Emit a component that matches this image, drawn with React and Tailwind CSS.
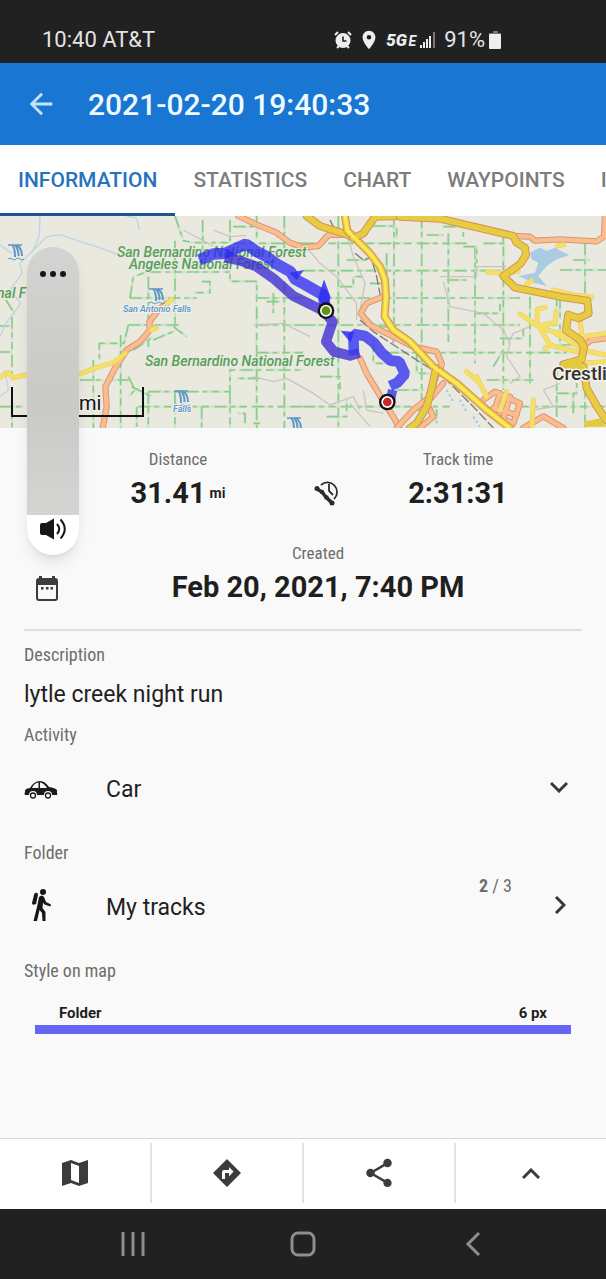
import React, { useState } from 'react';
import { MdArrowBack, MdLocationOn, MdShare } from 'react-icons/md';

const TABS = ['Information', 'Statistics', 'Chart', 'Waypoints', 'Images'];

// minor boundaries, drawn as dashed green strokes
const BOUNDARIES = [
    'M0 348H28 M36 320V510 M0 590H76 M36 590V654 M18 270l26 42 M0 426H30',
    'M525 18L550 92L580 98H690 M690 30V214H770V500 M525 92V350 M445 200V410 M390 264H590 M385 345H540 M390 264L400 200L440 186H690 M605 215H630V248H580',
    'M385 345L372 400H298V450 M362 375V654 M240 510H395 M415 590H909 M445 545H690V480H909 M445 545V654 M525 545V654 M605 590V654 M690 545V654 M770 480V654 M853 215V654 M280 450V654',
    'M770 345H909 M770 264H909 M770 428H909 M700 100H909 M853 18V130 M770 18V90 M700 50h60 M608 30V150 M800 275h40M820 250v60',
    'M385 500l20 40l-20 20M395 530l60 30 M520 350l40 30 M460 390l70 -30 M400 420l60 -40 M410 590v60 M735 640v-30h-20 M760 640h20 M780 505h-70',
    'M909 100H1400 M1015 18V654 M1182 18V380 M1265 18V654 M1345 70V400 M1425 110V460 M1510 80V540 M1590 260V520 M1680 260V330 M1755 100V260',
    'M909 182H1500 M960 264H1560 M909 345H1560 M1160 428H1700 M1460 510H1600 M909 590H1350 M1550 590H1818 M1755 500V654 M1670 480V620 M1680 180H1818',
    'M1120 48h70v40 M1280 75h50M1330 50h60v30 M1390 110h40v50 M1450 100h60v80 M1020 230h40v-30h30 M1110 220h50v-80 M1040 150h60 M1340 210h60 M1610 250h60v60 M1430 310h70v-30 M1500 385h70v-30 M1480 470l30 -50 M960 500h60v40 M980 620h60v-50 M1230 600h80v40 M1250 420v70h50 M1700 90h60 M1720 150h50',
    'M1630 345h50v60h40 M1670 550h60v-30 M1720 610v-60 M1190 540h80 M1160 130v60 M1140 350h40v50 M1120 390v70h50',
];

const TRAILS = [
    'M120 18L118 75L100 120L60 160L66 190L30 240L62 280L18 340L0 380 M100 120L140 80L180 74L250 98L290 110L350 132 M380 18L410 24L418 60 M0 105L35 130 M15 480L25 540L0 560',
];

const PATHS = [
    'M640 60L690 80L740 76 M550 60L640 108 M760 345L850 340L930 380 M760 500L820 515L860 505L940 550L990 585L1060 560L1080 600 M909 100L960 160L1010 200L1070 280L1070 330 M1040 70L1060 140L1095 220L1080 300L1130 350',
    'M1320 200h110v-30h90 M1330 215L1350 290L1450 310L1510 360L1530 400L1520 440L1560 500L1530 520 M1590 350L1540 370L1525 400 M1680 520L1630 540L1660 590L1600 600 M1090 540L1100 600L1150 610 M1110 650l-60 -70',
];

const ROADS_ORANGE = [
    'M715 18L770 44L830 68L870 98L909 112L955 108L985 75L1030 74',
    'M500 280L475 300L448 336L450 360L420 395L380 420L345 475L316 530L320 590L308 654',
    'M1144 262L1100 280L1082 310L1110 345L1240 410L1310 425L1325 460L1320 490',
    'M1080 445L1100 490L1130 540L1160 590L1180 620L1198 654',
    'M1310 490L1290 560L1240 600L1190 654 M1330 520L1280 580L1300 620L1260 654',
    'M1540 78L1590 80L1605 92L1680 88L1790 94L1812 80L1815 18',
    'M1450 570L1485 545L1560 580L1540 640L1490 620L1440 580 M1480 595l70 20M1500 550l-20 60M1530 560l-20 65 M1570 654l60 -35l60 35 M1818 385L1775 390L1745 410',
];

const ROADS_YELLOW = [
    'M920 18L960 48L1030 70L1060 82',
    'M1035 18L1042 62L1068 88L1108 128L1140 170L1155 210L1158 260L1154 320L1180 360L1230 395L1300 470L1370 520L1460 600L1530 654',
    'M1200 18L1125 20L1090 70L1060 85',
    'M1200 20L1320 26L1540 78L1550 98L1575 113L1578 135L1560 163L1510 198L1545 233L1620 248L1690 262L1762 272L1766 310L1735 325L1705 314L1698 360L1740 390L1752 410L1745 448L1690 463L1750 470L1760 535L1790 588L1818 630',
    'M1308 475L1296 530L1280 590L1250 640L1230 654',
];

const STREETS = [
    'M0 502L25 488L40 504L80 494 M240 492L280 476L340 458L375 430 M500 282L515 268 M455 360L468 354',
    'M1560 312L1610 346L1660 366L1740 378 M1610 346L1612 298L1635 292 M1668 305L1665 338L1612 348 M1620 353L1650 405L1740 428 M1650 405L1635 415 M1660 366L1750 418 M1462 186L1510 190L1555 184 M1580 222L1595 212 M1660 240L1720 255L1775 262',
    'M1400 485L1440 520L1460 560 M1440 520L1430 500 M1600 570L1596 654 M1520 545L1500 600 M1745 420L1818 435 M1750 380L1818 370 M1690 104L1672 108 M1740 330L1748 400 M1745 460L1818 455 M1760 640h58',
];

const Waterfall = ({ x, y }) => (
    <g transform={`translate(${x} ${y})`} stroke="#5e97c6" fill="none">
        <path d="M0 1H14" strokeWidth="1.5" />
        <path d="M4 1C7 3 7 8 7 13 M7 1C10 4 10.500 8 10.500 12 M9 1C13 4 14 8 14 12" strokeWidth="2" />
        <path d="M0 15q2 -2 4 0t4 0t4 0t4 0" strokeWidth="1" />
    </g>
);

const TrackMap = () => (
    <svg
        className="block h-53 w-full bg-[#eae9df] font-[Roboto,sans-serif]"
        viewBox="0 0 606 212"
        preserveAspectRatio="xMidYMid slice"
        role="img"
        aria-label="Track map"
    >
        <g transform="translate(0 -6) scale(0.33333)" fill="none" strokeLinejoin="round">
            <path d="M1590 128L1620 113L1640 123L1665 113L1708 136L1670 148L1640 168L1615 198L1640 228L1600 218L1555 198L1605 188L1615 158L1595 148Z" fill="#a9cbe4" />
            {BOUNDARIES.map((d) => (
                <g key={d}>
                    <path d={d} stroke="#cfe3c8" strokeWidth="7" strokeDasharray="70 14" />
                    <path d={d} stroke="#8bce8c" strokeWidth="5" strokeDasharray="36 12 14 14 22 16" />
                </g>
            ))}
            {TRAILS.map((d) => <path key={d} d={d} stroke="#bcd5e6" strokeWidth="4" />)}
            {PATHS.map((d) => <path key={d} d={d} stroke="#c9c5bf" strokeWidth="4" />)}
            <path d="M990 30L1005 60L1060 90L1110 130L1130 200L1142 262 M1065 130L1090 150L1120 140 M1080 330L1120 365L1250 450L1330 500L1420 590L1480 654" stroke="#7d7a78" strokeWidth="4" strokeDasharray="30 8" />
            <path d="M1340 540l20 35M1380 570l20 35M1420 620l20 30" stroke="#9cc9ec" strokeWidth="6" strokeDasharray="7 8" />
            {ROADS_ORANGE.map((d) => (
                <g key={d} strokeLinecap="round">
                    <path d={d} stroke="#dc9477" strokeWidth="19" />
                    <path d={d} stroke="#f9bd8e" strokeWidth="13" />
                </g>
            ))}
            {STREETS.map((d) => (
                <g key={d} strokeLinecap="round">
                    <path d={d} stroke="#e6cd68" strokeWidth="15" />
                    <path d={d} stroke="#f5df66" strokeWidth="12" />
                </g>
            ))}
            {ROADS_YELLOW.map((d) => (
                <g key={d} strokeLinecap="round">
                    <path d={d} stroke="#d6925a" strokeWidth="24" />
                    <path d={d} stroke="#e6cc3e" strokeWidth="18" />
                </g>
            ))}
            <path d="M1035 18L1042 62L1068 88L1108 128L1140 170L1155 210L1158 260L1154 320L1180 360L1230 395L1300 470L1370 520L1460 600L1530 654" stroke="#fbea56" strokeWidth="10" />
            <path d="M1680 475L1710 445L1740 450L1750 480Z M1755 635L1800 625L1818 650H1755Z" fill="#e3c93f" />
        </g>

        <g fill="#559f5c" fontSize="14" fontStyle="italic" fontWeight="500" stroke="#eae9df" strokeWidth="2" paintOrder="stroke">
            <text x="117" y="41">San Bernardino National Forest</text>
            <text x="129" y="53">Angeles National Forest</text>
            <text x="145" y="150">San Bernardino National Forest</text>
            <text x="-3" y="82">nal F</text>
        </g>
        <Waterfall x={8} y={28} />
        <Waterfall x={149} y={72} />
        <Waterfall x={174} y={174} />
        <Waterfall x={287} y={201} />
        <g fill="#5b93c3" fontSize="9" fontWeight="500" fontStyle="italic" stroke="#eef1ef" strokeWidth="2" paintOrder="stroke">
            <text x="123" y="96">San Antonio Falls</text>
            <text x="173" y="196">Falls</text>
        </g>

        <g transform="translate(0 -6) scale(0.33333)" fill="none" strokeLinejoin="bevel">
            <path
                d="M675 142L720 152L770 170L820 205L880 258L970 302L998 335L978 395L1002 425L1050 437L1078 428"
                stroke="#3a2ad2"
                strokeOpacity="0.78"
                strokeWidth="30"
                strokeLinejoin="round"
            />
            <path
                d="M598 150L640 132L675 130L738 102L770 125L800 140L835 165L872 185L885 208L912 222L970 255L975 290"
                stroke="#2b29f5"
                strokeOpacity="0.76"
                strokeWidth="34"
            />
            <path
                d="M1062 435L1060 372L1095 378L1122 398L1145 428L1172 452L1198 455L1215 492L1192 518L1170 528"
                stroke="#3a39f2"
                strokeOpacity="0.82"
                strokeWidth="32"
            />
            <path d="M1178 540L1170 575" stroke="#3a39f2" strokeOpacity="0.82" strokeWidth="28" />
            <path d="M972 208L992 262L985 280H962L955 262Z M675 115L705 130L685 145Z M868 188L912 180L890 210Z M1022 362L1062 366L1052 398Z" fill="#302ef2" fillOpacity="0.85" />
            <circle cx="978" cy="302" r="25" fill="#111" />
            <circle cx="978" cy="302" r="18" fill="#fff" />
            <circle cx="978" cy="302" r="13" fill="#5f9410" />
            <circle cx="1162" cy="576" r="25" fill="#111" />
            <circle cx="1162" cy="576" r="18" fill="#fff" />
            <circle cx="1162" cy="576" r="13" fill="#c9252b" />
        </g>
        <text x="552" y="164" fontSize="19" fontWeight="500" fill="#333" stroke="#f4f2ea" strokeWidth="3" paintOrder="stroke">Crestli</text>
        <path d="M12 171V200H143V171" fill="none" stroke="#111" strokeWidth="2" />
        <text x="79" y="194" fontSize="20" fill="#111" stroke="#f4f2ea" strokeWidth="2" paintOrder="stroke">mi</text>
    </svg>
);

const StatusBar = () => (
    <div className="flex h-[63px] items-center bg-[#212121] pt-4 pr-[105px] pl-[42px] text-[22px] leading-7 text-[#e4e4e4]">
        <span className="flex-1">10:40 AT&amp;T</span>
        <svg className="mr-1.5 h-[18px] w-[18px]" viewBox="0 0 18 18" fill="none" stroke="#eee" strokeWidth="2">
            <circle cx="9" cy="9.500" r="6.500" fill="#eee" />
            <path d="M1 4L4 1M17 4L14 1M3 17L5 15M15 17L13 15" />
            <path d="M9 5.500V10H12.500" stroke="#212121" strokeWidth="1.600" />
        </svg>
        <MdLocationOn className="mr-1.5 size-[22px] text-[#eee]" />
        <span className="mr-1 font-bold text-[#eee] italic">
            <span className="text-[17px] font-black">5G</span> <span className="-ml-1 text-sm">E</span>
        </span>
        <svg className="mr-2 h-[17px] w-4" viewBox="0 0 16 17" fill="#eee">
            <path d="M0 14h2v3H0zM3 11h2v6H3zM6 8h2v9H6zM9 5h2v12H9z" />
            <path d="M13 1h2v16h-2z" fill="#777" />
        </svg>
        <span>91%</span>
        <svg className="ml-1 h-[18px] w-3" viewBox="0 0 12 18" fill="#eee">
            <path d="M4 0h5v2h3v3H0V2h4z" fill="#777" />
            <rect y="3" width="12" height="15" rx="1" />
        </svg>
    </div>
);

const VolumePanel = () => {
    const [volume, setVolume] = useState(13);

    return (
        <div className="absolute top-[247px] left-[27px] flex h-77 w-13 flex-col items-center justify-between overflow-hidden rounded-full bg-linear-to-b from-[#d3d3d1] via-[#c9cac6] to-[#d8d8d8] shadow-lg">
            <input
                type="range"
                min="0"
                max="100"
                value={volume}
                onChange={(e) => setVolume(Number(e.target.value))}
                aria-label="Volume"
                className="absolute inset-0 h-full w-full opacity-0 [writing-mode:vertical-lr]"
            />
            <button type="button" aria-label="More" className="relative flex h-[54px] w-full items-center justify-center gap-1">
                <span className="size-[6px] rounded-full bg-[#161616]" />
                <span className="size-[6px] rounded-full bg-[#161616]" />
                <span className="size-[6px] rounded-full bg-[#161616]" />
            </button>
            <button type="button" aria-label="Mute" className="relative flex h-10 w-full justify-center bg-white pt-[3px]">
                <svg className="h-[22px] w-7" viewBox="0 0 28 22" fill="none" stroke="#161616" strokeWidth="2">
                    <path d="M1 7Q1 5 3 5H7L15 0.500V21.500L7 17H3Q1 17 1 15Z" fill="#161616" stroke="none" />
                    <path d="M18 6Q22.500 11 18 16M21.500 1.500Q30 11 21.500 20.500" />
                </svg>
            </button>
        </div>
    );
};

const CalendarIcon = () => (
    <svg className="h-[25px] w-[22px]" viewBox="0 0 22 25" fill="#3c3c3c">
        <path d="M3 0h3v2h10V0h3v2Q22 2 22 5V22Q22 25 19 25H3Q0 25 0 22V5Q0 2 3 2ZM2 9V22Q2 23 3 23H19Q20 23 20 22V9Z" />
        <path d="M5 11h2.500v2.500H5zM10 11h2.500v2.500H10zM14.500 11H17v2.500h-2.500z" />
    </svg>
);

const TrackTimeIcon = () => (
    <svg className="size-7" viewBox="0 0 28 28" fill="none" stroke="#2b2b2b">
        <path d="M7 6A9.500 9.500 0 1 1 20 20" strokeWidth="1.800" />
        <path d="M15 5V12L19 16" strokeWidth="1.800" />
        <path d="M3 10L8 13L12 18L18 24" strokeWidth="3.500" />
        <g fill="#2b2b2b" stroke="none">
            <circle cx="3" cy="9.500" r="2.500" />
            <circle cx="8" cy="13" r="2.300" />
            <circle cx="12.500" cy="18.500" r="2.300" />
            <circle cx="18" cy="24" r="2.500" />
        </g>
    </svg>
);

const CarIcon = () => (
    <svg className="h-[18px] w-[34px]" viewBox="0 0 34 18" fill="#1b1b1b">
        <path d="M1 9Q3 7 6 7Q10 0 16 0Q21 0 25 6Q31 7 33 9V12Q34 14 32 14H28A4 4 0 0 0 20 14H13A4 4 0 0 0 5 14H1Q0 13 1 11ZM8 7H14.500V1.500Q10 2 8 7ZM16 7H23Q20 2 16 1.500Z" fillRule="evenodd" />
        <circle cx="9" cy="14.500" r="2.500" fill="none" stroke="#1b1b1b" strokeWidth="1.300" />
        <circle cx="24" cy="14.500" r="2.500" fill="none" stroke="#1b1b1b" strokeWidth="1.300" />
    </svg>
);

const HikerIcon = () => (
    <svg className="h-8 w-5" viewBox="0 0 20 32" fill="#161616">
        <circle cx="11" cy="3" r="3" />
        <path d="M3 4Q6 3 6 6L4 15Q0 17 0 14L2 6Q2 5 3 4Z" />
        <path d="M7 8Q10 5 12 8L14 13L19 15.500L18.500 17.500L12.500 15.500L11 13.500L10.500 19L13.500 23L13.500 32H10.500L10 24L7.500 21L5 32H1.500L5 18Z" />
    </svg>
);

const FieldLabel = ({ children, htmlFor }) => (
    <label htmlFor={htmlFor} className="block text-[18px] leading-6 text-[#6d6d6d] font-['Roboto_Condensed',Roboto,sans-serif]">
        {children}
    </label>
);

const Stat = ({ label, value, unit }) => (
    <div className="flex-1 text-center">
        <p className="text-[17px] leading-6 text-[#6d6d6d] font-['Roboto_Condensed',Roboto,sans-serif]">{label}</p>
        <p className="mt-1 flex items-center justify-center text-[29px] leading-9 font-bold">
            {value}
            {unit && <span className="ml-1 text-sm">{unit}</span>}
        </p>
    </div>
);

const App = () => {
    const [activeTab, setActiveTab] = useState('Information');

    return (
        <div className="relative flex min-h-screen flex-col overflow-x-hidden bg-[#f9f9f9] text-[#1f1f1f] font-[Roboto,sans-serif]">
            <StatusBar />

            <header className="flex h-[82px] items-center bg-[#1976d2] px-6 text-[#eefaff]">
                <button type="button" aria-label="Back" className="mr-[30px]">
                    <MdArrowBack className="size-[34px] text-[#c3e4fb]" />
                </button>
                <h1 className="pt-0.5 text-[30px] leading-9 font-medium">2021-02-20 19:40:33</h1>
            </header>

            <nav className="flex h-[71px] shrink-0 overflow-hidden bg-white">
                {TABS.map((tab) => (
                    <button
                        key={tab}
                        type="button"
                        onClick={() => setActiveTab(tab)}
                        className={`border-b-3 px-[18px] pt-1 text-[21px] font-medium uppercase ${activeTab === tab ? 'border-[#1b5592] text-[#2673bd]' : 'border-transparent text-[#7c7c7c]'}`}
                    >
                        {tab}
                    </button>
                ))}
            </nav>

            <TrackMap />
            <VolumePanel />

            <main className="flex-1 px-6 pt-[19px]">
                <div className="flex items-end pr-4 pl-[46px]">
                    <Stat label="Distance" value="31.41" unit="mi" />
                    <div className="flex w-16 justify-end pr-2 pb-1">
                        <TrackTimeIcon />
                    </div>
                    <Stat label="Track time" value="2:31:31" />
                </div>
                <div className="mt-[30px] flex items-end pr-4">
                    <div className="flex w-[46px] justify-center pb-1">
                        <CalendarIcon />
                    </div>
                    <Stat label="Created" value="Feb 20, 2021, 7:40 PM" />
                </div>

                <hr className="mt-6 border-t-2 border-[#dedede]" />

                <section className="mt-3">
                    <FieldLabel>Description</FieldLabel>
                    <p className="my-3 text-[23px] leading-8">lytle creek night run</p>
                </section>

                <FieldLabel htmlFor="activity">Activity</FieldLabel>
                <div className="relative mb-2 flex h-[86px] items-center">
                    <span className="w-[82px]"><CarIcon /></span>
                    <select id="activity" className="h-full flex-1 appearance-none bg-transparent text-[23px] leading-8">
                        <option>Car</option>
                    </select>
                    <svg className="pointer-events-none absolute right-3.5 mb-1.5 h-3 w-[18px]" viewBox="0 0 18 12" fill="none" stroke="#383838" strokeWidth="3">
                        <path d="M1 2L9 10L17 2" />
                    </svg>
                </div>

                <FieldLabel htmlFor="folder">Folder</FieldLabel>
                <button id="folder" type="button" className="mb-2 flex h-[86px] w-full items-center text-left">
                    <span className="flex w-[82px] pb-1.5 pl-2"><HikerIcon /></span>
                    <span className="flex-1 text-[23px] leading-8">My tracks</span>
                    <span className="mr-[42px] pb-11 text-[18px] leading-6 text-[#6d6d6d] font-['Roboto_Condensed',Roboto,sans-serif]">
                        <b>2</b> / 3
                    </span>
                    <svg className="mr-4 mb-1.5 h-[18px] w-3" viewBox="0 0 12 18" fill="none" stroke="#383838" strokeWidth="3">
                        <path d="M2 1L10 9L2 17" />
                    </svg>
                </button>

                <FieldLabel>Style on map</FieldLabel>
                <div className="mx-[11px] mt-5">
                    <div className="flex justify-between px-6 text-[15px] leading-5 font-bold">
                        <span>Folder</span>
                        <span>6 px</span>
                    </div>
                    <div className="mt-0.5 h-[9px] bg-[#6666f5]" />
                </div>
            </main>

            <footer className="mt-6">
                <div className="flex h-[71px] items-center border-t border-[#d6d6d6] bg-white pb-0.5 text-[#3c3c3c]">
                    <button type="button" aria-label="Show on map" className="flex h-[60px] flex-1 items-center justify-center border-r-2 border-[#e4e4e4]">
                        <svg className="size-[26px]" viewBox="0 0 26 26" fill="currentColor" fillRule="evenodd">
                            <path d="M0 3L9 0L17 3L26 0V23L17 26L9 23L0 26ZM9 3V20L17 23V6Z" />
                        </svg>
                    </button>
                    <button type="button" aria-label="Navigate" className="flex h-[60px] flex-1 items-center justify-center border-r-2 border-[#e4e4e4]">
                        <svg className="size-[30px]" viewBox="0 0 30 30" fill="currentColor" fillRule="evenodd">
                            <path d="M15 1L29 15L15 29L1 15ZM10 21H13V15H17V18.500L21.500 13.500L17 9V12H12Q10 12 10 14Z" />
                        </svg>
                    </button>
                    <button type="button" aria-label="Share" className="flex h-[60px] flex-1 items-center justify-center border-r-2 border-[#e4e4e4]">
                        <MdShare className="size-[34px]" />
                    </button>
                    <button type="button" aria-label="Expand" className="flex h-[60px] flex-1 items-center justify-center">
                        <svg className="h-[11px] w-[18px]" viewBox="0 0 18 11" fill="none" stroke="currentColor" strokeWidth="3">
                            <path d="M1 10L9 2L17 10" />
                        </svg>
                    </button>
                </div>
                <div className="grid h-[70px] grid-cols-3 items-center justify-items-center bg-[#212121] px-12">
                    <button type="button" aria-label="Recent apps">
                        <svg className="h-[26px] w-6" viewBox="0 0 24 26" stroke="#8e8e8e" strokeWidth="3">
                            <path d="M2 1V25M12 1V25M22 1V25" />
                        </svg>
                    </button>
                    <button type="button" aria-label="Home">
                        <svg className="size-[26px]" viewBox="0 0 26 26" fill="none" stroke="#8e8e8e" strokeWidth="3">
                            <rect x="2" y="2" width="22" height="22" rx="6" />
                        </svg>
                    </button>
                    <button type="button" aria-label="Go back">
                        <svg className="h-[26px] w-4" viewBox="0 0 16 26" fill="none" stroke="#8e8e8e" strokeWidth="3">
                            <path d="M14 2L3 13L14 24" />
                        </svg>
                    </button>
                </div>
            </footer>
        </div>
    );
};

export default App;
